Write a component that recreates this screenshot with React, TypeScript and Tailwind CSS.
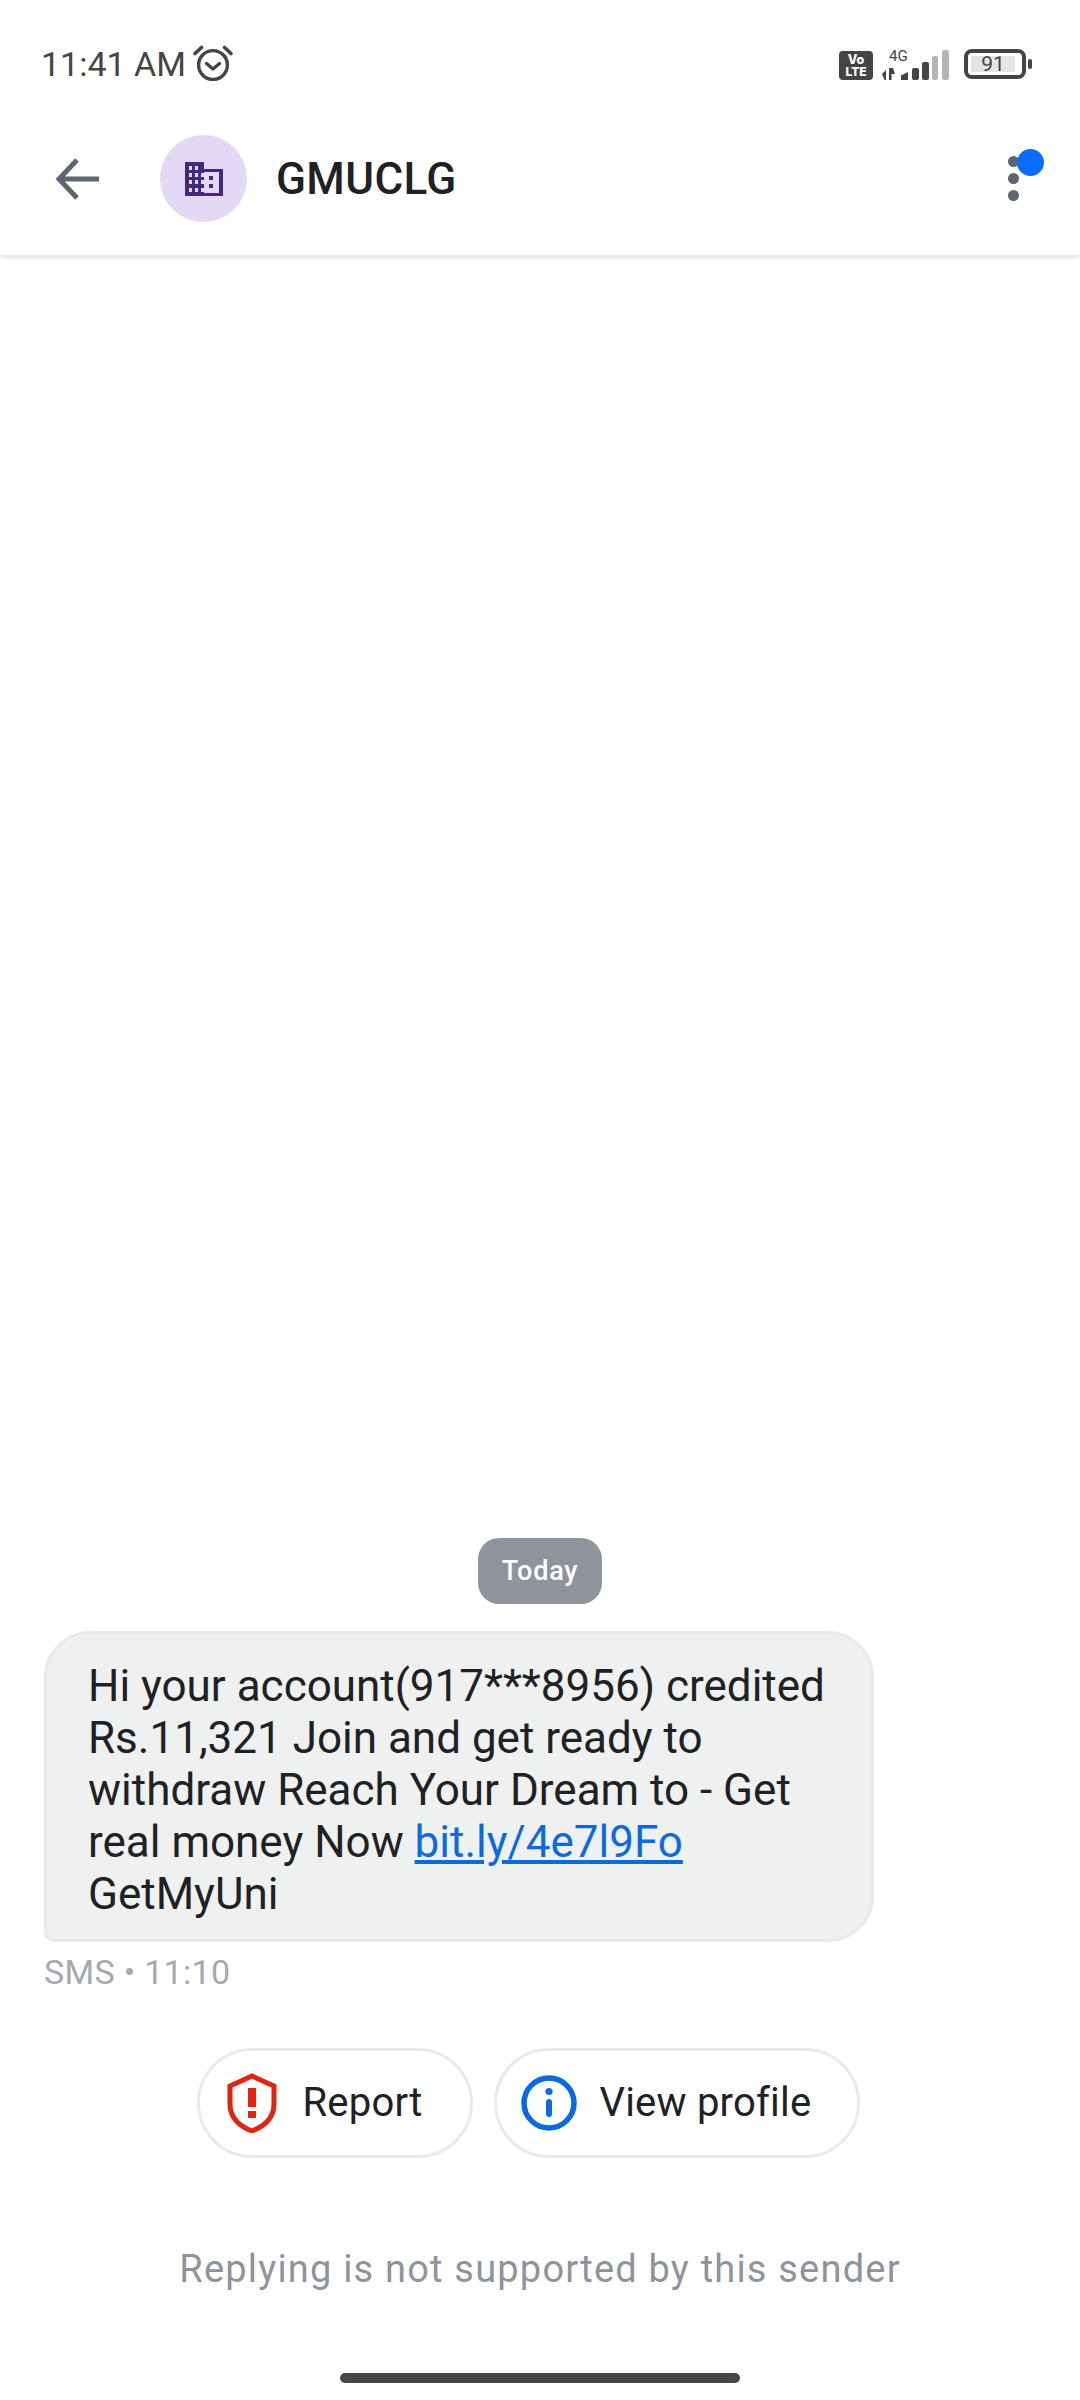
import React from "react";

const Alarm = () => (
  <svg width="42" height="38" viewBox="0 0 42 38" fill="none" stroke="#444" strokeWidth="3.4" strokeLinecap="round" strokeLinejoin="round" className="-mt-[3px]">
    <circle cx="21" cy="21" r="14.4" />
    <path d="M14.5 19.5 21 25l6.5-5.5" />
    <path d="M3 9.5 9.5 3.5M39 9.5 32.5 3.5" strokeWidth="3.6" />
  </svg>
);

const Status = () => (
  <svg width="110" height="40" viewBox="0 -6 110 40" className="block">
    <rect x="0" y="2" width="34" height="29" rx="4" fill="#444" />
    <text x="17" y="15" textAnchor="middle" fontFamily="Inter, sans-serif" fontWeight="800" fontSize="12.5" fill="#fff">Vo</text>
    <text x="17" y="27" textAnchor="middle" fontFamily="Inter, sans-serif" fontWeight="800" fontSize="12" fill="#fff">LTE</text>
    <text x="50" y="11.5" fontFamily="Roboto, sans-serif" fontSize="15" fill="#444">4G</text>
    <path d="M43 25l4-4v10h-1.5zM50 19v12h2.5v-6h3.5l-2-6z" fill="#444" />
    <path d="M62 31v-4.5l7-3.5v8z" fill="#444" />
    <rect x="73" y="19" width="7" height="12" rx="2" fill="#444" />
    <rect x="83" y="13" width="7" height="18" rx="2" fill="#444" />
    <rect x="93" y="7" width="6" height="24" rx="2" fill="#b5b5b5" />
    <rect x="103" y="1" width="7" height="30" rx="2" fill="#b5b5b5" />
  </svg>
);

const Battery = () => (
  <div className="flex items-center">
    <div className="w-[62px] h-[30px] border-[4px] border-[#444] rounded-[8px] p-[3px]">
      <div className="w-[44px] h-full bg-[#e4e4e4] rounded-[2px] flex items-center justify-center text-[#444] text-[21px] leading-none">91</div>
    </div>
    <div className="ml-[2px] w-[4px] h-[10px] bg-[#444] rounded-[2px]" />
  </div>
);

const Building = () => (
  <svg width="38" height="34" viewBox="0 0 38 34">
    <path fillRule="evenodd" fill="#46297f" d="M0 0h19v7h19v27H0z M4 4v4h3V4z M10 4v4h3V4z M4 11v4h3v-4z M10 11v4h3v-4z M16 11v4h3v-4z M4 18v4h3v-4z M10 18v4h3v-4z M16 18v4h3v-4z M4 26v4h3v-4z M10 26v4h3v-4z M19 10v21h15V10z" />
    <path fill="#e3d9f4" d="M22 10h12v21H19V10z" />
    <path fill="#46297f" d="M24 14h4v4h-4zM24 22h4v4h-4z" />
    <path fill="#e3d9f4" d="M16 26h3v4h-3z" />
  </svg>
);

export default function App() {
  return (
    <div className="w-[1080px] h-[2400px] bg-white flex flex-col overflow-hidden font-['Roboto',sans-serif]">
      <div className="h-[90px] shrink-0 flex items-start justify-between pl-[41px] pr-[48px] pt-[43px]">
        <div className="flex items-center gap-[6px] text-[#444] text-[34px] leading-[42px]">
          <span>11:41 AM</span>
          <Alarm />
        </div>
        <div className="flex items-start gap-[15px]">
          <Status />
          <div className="mt-[6px]"><Battery /></div>
        </div>
      </div>

      <div className="relative z-10 h-[166px] shrink-0 flex items-center bg-white shadow-[0_3px_4px_-1px_rgba(0,0,0,0.12)] pl-[55px] pr-[34px] pt-[12px] border-b border-[#eeeeee]">
        <svg width="44" height="44" viewBox="0 0 44 44" fill="none" stroke="#5f6570" strokeWidth="5" strokeLinejoin="miter">
          <path d="M45 22H4M22 3 4 22l18 19" />
        </svg>
        <div className="ml-[61px] w-[87px] h-[87px] rounded-full bg-[#e3d9f4] flex items-center justify-center">
          <Building />
        </div>
        <div className="ml-[29px] text-[44px] font-medium text-[#202124] leading-none tracking-[0.4px]">GMUCLG</div>
        <div className="ml-auto relative w-[38px] h-[70px] flex flex-col items-start justify-center gap-[6px]">
          <div className="w-[11px] h-[11px] rounded-full bg-[#5f6570]" />
          <div className="w-[11px] h-[11px] rounded-full bg-[#5f6570]" />
          <div className="w-[11px] h-[11px] rounded-full bg-[#5f6570]" />
          <div className="absolute left-[9px] top-[5px] w-[27px] h-[27px] rounded-full bg-[#0b6bff]" />
        </div>
      </div>

      <div className="flex-1 flex flex-col justify-end">
        <div className="flex justify-center mb-[27px]">
          <div className="w-[124px] h-[66px] rounded-[21px] bg-[#8f949c] flex items-center justify-center text-white text-[27px] font-medium tracking-[0.8px]">Today</div>
        </div>

        <div className="ml-[44px] w-[830px] h-[311px] bg-[#eff1f1] border-[3px] border-[#e8eaed] rounded-[46px] rounded-bl-[10px] pl-[41px] pt-[26px] text-[44px] leading-[52px] text-[#202124] whitespace-nowrap">
          <div>Hi your account(917***8956) credited</div>
          <div>Rs.11,321 Join and get ready to</div>
          <div>withdraw Reach Your Dream to - Get</div>
          <div>real money Now <span className="text-[#0b6bde] underline">bit.ly/4e7l9Fo</span></div>
          <div>GetMyUni</div>
        </div>
        <div className="ml-[44px] mt-[10px] text-[34px] leading-[40px] text-[#a5a9b0] tracking-[0.3px]">SMS • 11:10</div>

        <div className="mt-[56px] flex justify-center gap-[21px] pr-[24px]">
          <div className="w-[276px] h-[110px] rounded-full border-[3px] border-[#e8eaed] flex items-center pl-[27px] gap-[26px]">
            <svg width="50" height="60" viewBox="0 0 50 60" fill="none">
              <path d="M25 3 47 13v18c0 13-9 22-22 27C12 53 3 44 3 31V13z" stroke="#e02412" strokeWidth="5" strokeLinejoin="miter" />
              <rect x="21" y="15" width="8" height="19" fill="#e02412" />
              <rect x="21" y="38" width="8" height="7" fill="#e02412" />
            </svg>
            <span className="text-[40px] text-[#202124] tracking-[0.2px]">Report</span>
          </div>
          <div className="w-[366px] h-[110px] rounded-full border-[3px] border-[#e8eaed] flex items-center pl-[24px] gap-[23px]">
            <svg width="56" height="56" viewBox="0 0 56 56" fill="none">
              <circle cx="28" cy="28" r="25" stroke="#0b6bde" strokeWidth="5.5" />
              <circle cx="28" cy="16.5" r="3.6" fill="#0b6bde" />
              <rect x="25" y="24" width="6" height="18" rx="3" fill="#0b6bde" />
            </svg>
            <span className="text-[40px] text-[#202124] tracking-[0.2px]">View profile</span>
          </div>
        </div>

        <div className="mt-[87px] text-center text-[38px] leading-[48px] text-[#8e949c] tracking-[1.2px]">Replying is not supported by this sender</div>

        <div className="mt-[80px] mb-[17px] mx-auto w-[400px] h-[10px] rounded-full bg-[#474747]" />
      </div>
    </div>
  );
}
